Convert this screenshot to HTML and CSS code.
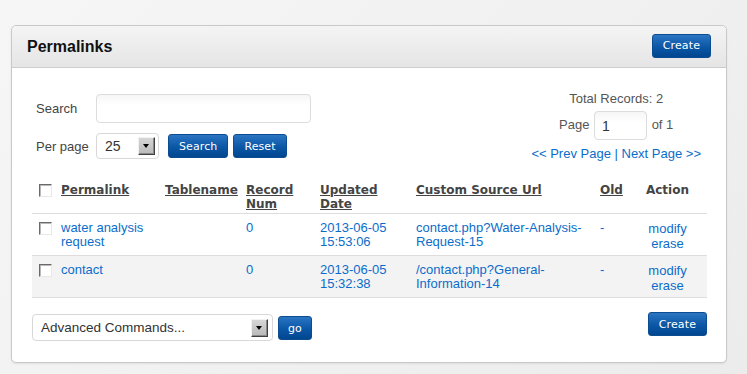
FILE: index.html
```html
<!DOCTYPE html>
<html lang="en">
<head>
  <meta charset="UTF-8" />
  <title>Permalinks</title>
  <link rel="stylesheet" href="styles.css">
</head>
<body>
  <div class="panel">
    <div class="panel-head">
      <h2>Permalinks</h2>
      <button type="button" class="btn">Create</button>
    </div>

    <div class="panel-body">
      <div class="toolbar">
        <form class="filters">
          <div class="field">
            <label for="q">Search</label>
            <input type="text" id="q" class="text-input search-input" />
          </div>
          <div class="field per-page">
            <label>Per page</label>
            <div class="select select-small">
              <span class="select-value">25</span>
              <span class="select-arrow"></span>
            </div>
            <button type="button" class="btn">Search</button>
            <button type="button" class="btn">Reset</button>
          </div>
        </form>

        <div class="pager">
          <div class="pager-total">Total Records: 2</div>
          <div class="pager-page">
            Page <input type="text" class="text-input page-input" value="1" /> of 1
          </div>
          <div class="pager-links">
            <a href="#">&lt;&lt; Prev Page</a> | <a href="#">Next Page &gt;&gt;</a>
          </div>
        </div>
      </div>

      <table class="grid">
        <colgroup>
          <col style="width: 25px">
          <col style="width: 104px">
          <col style="width: 81px">
          <col style="width: 74px">
          <col style="width: 96px">
          <col style="width: 184px">
          <col style="width: 45px">
          <col>
        </colgroup>
        <thead>
          <tr>
            <th class="col-check"><input type="checkbox" class="check" /></th>
            <th><a href="#">Permalink</a></th>
            <th><a href="#">Tablename</a></th>
            <th><a href="#">Record Num</a></th>
            <th><a href="#">Updated Date</a></th>
            <th><a href="#">Custom Source Url</a></th>
            <th><a href="#">Old</a></th>
            <th class="col-action">Action</th>
          </tr>
        </thead>
        <tbody>
          <tr>
            <td class="col-check"><input type="checkbox" class="check" /></td>
            <td><a href="#">water analysis request</a></td>
            <td></td>
            <td><a href="#">0</a></td>
            <td><a href="#">2013-06-05 15:53:06</a></td>
            <td><a href="#">contact.php?Water-Analysis-Request-15</a></td>
            <td><a href="#">-</a></td>
            <td class="col-action"><a href="#">modify</a><a href="#">erase</a></td>
          </tr>
          <tr class="alt">
            <td class="col-check"><input type="checkbox" class="check" /></td>
            <td><a href="#">contact</a></td>
            <td></td>
            <td><a href="#">0</a></td>
            <td><a href="#">2013-06-05 15:32:38</a></td>
            <td><a href="#">/contact.php?General-Information-14</a></td>
            <td><a href="#">-</a></td>
            <td class="col-action"><a href="#">modify</a><a href="#">erase</a></td>
          </tr>
        </tbody>
      </table>

      <div class="footer">
        <div class="select select-wide">
          <span class="select-value">Advanced Commands...</span>
          <span class="select-arrow"></span>
        </div>
        <button type="button" class="btn btn-go">go</button>
        <button type="button" class="btn btn-create">Create</button>
      </div>
    </div>
  </div>
</body>
</html>
```

FILE: styles.css
```css
:root {
  --link: #0b6dcb;
  --text: #444444;
  --border: #dddddd;
}

body {
  margin: 0;
  padding: 25px 20px 12px 11px;
  font-family: 'Liberation Sans', Arial, sans-serif;
  font-size: 13px;
  color: var(--text);
  background: linear-gradient(135deg, #f6f6f6, #ececec);
  min-height: 337px;
}

a {
  color: var(--link);
  text-decoration: none;
}

.panel {
  background: #ffffff;
  border: 1px solid #c9c9c9;
  border-radius: 5px;
  box-shadow: 0 1px 2px rgba(0, 0, 0, 0.08);
}

.panel-head {
  display: flex;
  justify-content: space-between;
  align-items: center;
  height: 41px;
  padding: 0 15px 0 15px;
  background: linear-gradient(#f4f4f4, #e5e5e5);
  border-bottom: 1px solid #cccccc;
  border-radius: 5px 5px 0 0;
}

.panel-head h2 {
  margin: 0;
  font-size: 16px;
  color: #111111;
}

.panel-head .btn {
  margin-top: -2px;
}

.panel-body {
  padding: 26px 19px 21px 20px;
}

/* buttons */
.btn {
  height: 24px;
  padding: 0 10px;
  font-family: 'DejaVu Sans', Verdana, sans-serif;
  font-size: 11px;
  letter-spacing: 0.1px;
  color: #ffffff;
  background: linear-gradient(#2b75c2, #0a57a6 55%, #014690);
  border: 1px solid #0b4d90;
  border-radius: 3px;
  cursor: pointer;
}

/* filters + pager */
.toolbar {
  display: flex;
  justify-content: space-between;
  align-items: flex-start;
}

.filters {
  padding-left: 4px;
}

.field {
  display: flex;
  align-items: center;
}

.field label {
  width: 60px;
}

.per-page {
  margin-top: 10px;
}

.per-page .btn {
  margin-left: 5px;
}

.per-page .select {
  margin-right: 4px;
}

.text-input {
  box-sizing: border-box;
  height: 29px;
  border: 1px solid #dcdcdc;
  border-radius: 4px;
  background: linear-gradient(#f6f6f6, #ffffff 40%);
  font-family: 'Liberation Sans', Arial, sans-serif;
  font-size: 14px;
  color: #333333;
  padding: 0 7px;
  outline: none;
}

.search-input {
  width: 215px;
}

.pager {
  margin-top: -3px;
  margin-right: 6px;
  text-align: center;
  color: #555555;
}

.pager-total {
  line-height: 16px;
}

.pager-page {
  margin-top: 4px;
  height: 29px;
}

.page-input {
  width: 53px;
  margin: 0 1px;
  vertical-align: middle;
}

.pager-links {
  margin-top: 6px;
  line-height: 16px;
  color: var(--link);
}

/* fake selects */
.select {
  box-sizing: border-box;
  display: flex;
  align-items: center;
  justify-content: space-between;
  border: 1px solid #d8d8d8;
  border-radius: 4px;
  background: #ffffff;
  color: #333333;
}

.select-small {
  width: 63px;
  height: 26px;
  padding: 0 3px 0 8px;
  font-size: 14px;
}

.select-wide {
  width: 241px;
  height: 27px;
  padding: 0 4px 0 8px;
  font-size: 13.5px;
}

.select-arrow {
  position: relative;
  box-sizing: border-box;
  width: 17px;
  height: 18px;
  background: linear-gradient(#d6d6d6, #b9b9b9);
  border: 1px solid;
  border-color: #f2f2f2 #404040 #404040 #f2f2f2;
  box-shadow: inset -1px -1px #8a8a8a;
}

.select-arrow::after {
  content: '';
  position: absolute;
  left: 4px;
  top: 6px;
  border-left: 3.5px solid transparent;
  border-right: 3.5px solid transparent;
  border-top: 4px solid #000000;
}

/* table */
.grid {
  width: 100%;
  margin-top: 18px;
  border-collapse: collapse;
  table-layout: fixed;
}

.grid th,
.grid td {
  padding: 7px 4px 4px;
  line-height: 14px;
  text-align: left;
  vertical-align: top;
  border-bottom: 1px solid var(--border);
}

.grid th {
  padding: 3px 2px 2px 4px;
  font-family: 'DejaVu Sans', Verdana, sans-serif;
  font-size: 12px;
  font-weight: bold;
  color: var(--text);
}

.grid th a {
  color: var(--text);
  text-decoration: underline;
}

.grid tr.alt td {
  background: #f3f3f3;
}

.grid .col-check {
  padding-left: 7px;
  padding-right: 0;
}

.grid .col-action {
  text-align: center;
  padding-right: 17px;
}

.grid td.col-action a {
  display: block;
  line-height: 15px;
}

.check {
  appearance: none;
  box-sizing: border-box;
  width: 13px;
  height: 13px;
  margin: 1px 0 0;
  border: 1px solid;
  border-color: #6a6a6a #e8e8e8 #e8e8e8 #6a6a6a;
  box-shadow: inset 1px 1px #b8b8b8;
  background: #ffffff;
}

/* footer */
.footer {
  display: flex;
  align-items: flex-start;
  margin-top: 14px;
}

.footer .select {
  margin-top: 2px;
}

.btn-go {
  margin: 4px 0 0 5px;
  padding: 0 9px;
}

.btn-create {
  margin-left: auto;
}
```
